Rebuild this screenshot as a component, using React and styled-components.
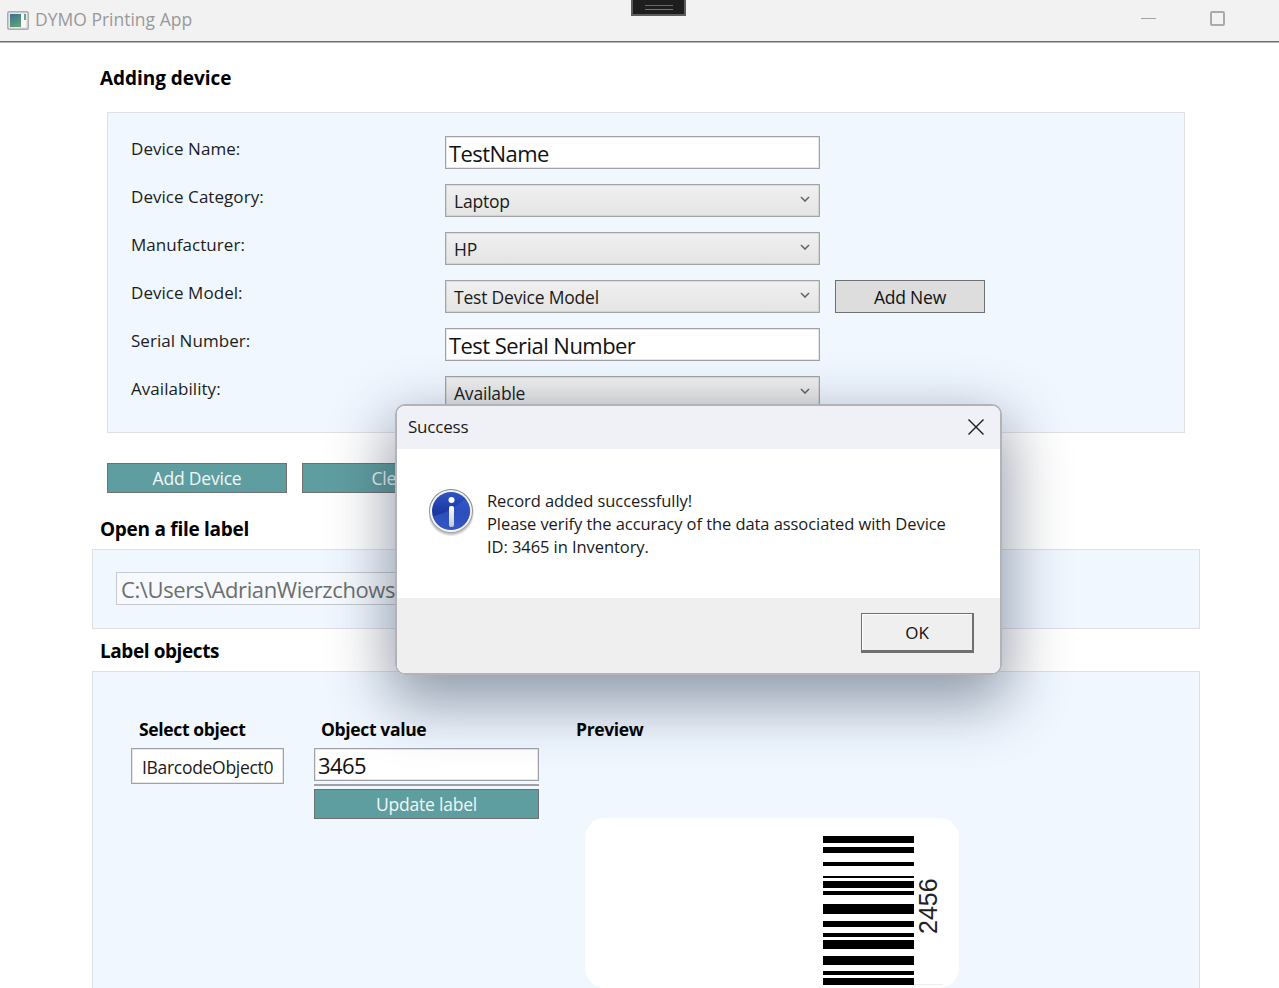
import React from "react";
import styled, { createGlobalStyle } from "styled-components";

const GlobalStyle = createGlobalStyle`
  html, body {
    margin: 0;
    padding: 0;
    background: #fff;
  }
  body {
    font-family: "Open Sans", "Noto Sans", sans-serif;
    color: #111;
  }
`;

const Page = styled.div`
  position: relative;
  width: 1279px;
  height: 988px;
  overflow: hidden;
  background: #fff;
`;

const TitleBar = styled.div`
  height: 41px;
  background: #f2f2f2;
  border-bottom: 1px solid #6e6e6e;
  box-shadow: 0 1px 0 #b5b5b5;
  display: flex;
  align-items: center;
  padding-left: 7px;
`;

const AppName = styled.div`
  margin-left: 6px;
  font-size: 17.5px;
  color: #999;
  margin-top: -4px;
`;

const WindowButtons = styled.div`
  margin-left: auto;
  display: flex;
  align-items: center;
  margin-right: 54px;
  gap: 54px;
  margin-top: -5px;
`;

const Minimize = styled.div`
  width: 15px;
  height: 1px;
  background: #a3a3a3;
`;

const Maximize = styled.div`
  width: 11px;
  height: 11px;
  border: 2px solid #aaa;
  border-radius: 2px;
`;

const DragHandle = styled.div`
  position: absolute;
  left: 631px;
  top: 0;
  width: 51px;
  height: 14px;
  background: #1e1e1e;
  border: 2px solid #5c5c5c;
  border-top: 0;
  display: flex;
  align-items: flex-start;
  justify-content: center;
  &::after {
    content: "";
    width: 28px;
    height: 3px;
    margin-top: 5px;
    border-top: 1px solid #666;
    border-bottom: 1px solid #777;
  }
`;

const Heading = styled.h2`
  margin: ${props => props.$top}px 0 0 100px;
  font-size: 19px;
  line-height: 28px;
  font-weight: 700;
  letter-spacing: ${props => props.$tracking}px;
  color: #000;
`;

const Panel = styled.div`
  box-sizing: border-box;
  margin: ${props => props.$top}px 0 0 ${props => props.$left}px;
  width: ${props => props.$width}px;
  background: #f0f7ff;
  border: 1px solid #dfe0e2;
`;

const FormPanel = styled(Panel)`
  height: 321px;
  padding: 23px 0 0 23px;
  display: grid;
  grid-template-columns: 314px 375px 150px;
  grid-auto-rows: 33px;
  column-gap: 0;
  row-gap: 15px;
`;

const FieldLabel = styled.div`
  font-size: 17px;
  line-height: 25px;
  letter-spacing: 0.05px;
  color: #1c1c1c;
`;

const TextBox = styled.div`
  box-sizing: border-box;
  height: 33px;
  background: #fff;
  border: 1px solid #a0a2a7;
  box-shadow: inset 0 0 0 1px rgba(170, 172, 176, 0.3);
  padding-left: 3px;
  font-size: 22px;
  line-height: 32px;
  letter-spacing: -0.55px;
  color: #111;
  white-space: nowrap;
  overflow: hidden;
`;

const Select = styled.div`
  box-sizing: border-box;
  height: 33px;
  background: linear-gradient(#f0f0f0, #e4e4e4);
  border: 1px solid #a4a4a4;
  box-shadow: inset 0 0 0 1px rgba(170, 170, 170, 0.3);
  padding: 1px 9px 0 8px;
  display: flex;
  align-items: center;
  justify-content: space-between;
  font-size: 17.5px;
  letter-spacing: -0.2px;
  color: #1a1a1a;
  svg {
    margin-top: -5px;
  }
`;

const AddNew = styled.div`
  box-sizing: border-box;
  margin-left: 15px;
  width: 150px;
  height: 33px;
  background: #dddddd;
  border: 1px solid #707070;
  display: flex;
  align-items: center;
  justify-content: center;
  font-size: 17.5px;
  letter-spacing: -0.2px;
  color: #111;
`;

const Actions = styled.div`
  display: flex;
  gap: 15px;
  margin: 30px 0 0 107px;
`;

const TealButton = styled.div`
  box-sizing: border-box;
  width: ${props => props.$width}px;
  height: 30px;
  background: #5f9ea0;
  border: 1px solid #707070;
  display: flex;
  align-items: center;
  justify-content: center;
  font-size: 17.5px;
  letter-spacing: -0.2px;
  color: #f2f6f6;
`;

const FilePanel = styled(Panel)`
  height: 80px;
  padding: 22px 0 0 23px;
`;

const PathBox = styled.div`
  box-sizing: border-box;
  width: 700px;
  height: 33px;
  background: #f6fafe;
  border: 1px solid #c6c9ce;
  padding-left: 4px;
  font-size: 22px;
  line-height: 33px;
  letter-spacing: -0.4px;
  color: #6e6e6e;
  white-space: nowrap;
`;

const ObjectsPanel = styled(Panel)`
  padding: 43px 0 40px 38px;
  display: grid;
  grid-template-columns: 153px 225px 400px;
  column-gap: 30px;
  align-items: start;
`;

const Column = styled.div`
  display: flex;
  flex-direction: column;
  &:last-child {
    margin-left: 7px;
  }
`;

const ColumnTitle = styled.div`
  font-size: 17.5px;
  line-height: 28px;
  font-weight: 700;
  letter-spacing: -0.35px;
  color: #000;
  margin-bottom: 5px;
  padding-left: ${props => props.$indent}px;
`;

const ObjectItem = styled.div`
  box-sizing: border-box;
  height: 36px;
  background: #fff;
  border: 1px solid #a0a2a7;
  box-shadow: inset 0 0 0 1px rgba(170, 172, 176, 0.3);
  padding-left: 10px;
  font-size: 17.5px;
  line-height: 36px;
  letter-spacing: -0.3px;
  color: #1a1a1a;
`;

const Divider = styled.div`
  height: 2px;
  background: #a0a2a8;
  margin: 3px 0;
`;

const LabelCard = styled.div`
  box-sizing: border-box;
  margin: 70px 0 0 9px;
  width: 374px;
  height: 170px;
  background: #fff;
  border-radius: 20px;
  padding: 18px 0 0 238px;
  svg {
    display: block;
  }
`;

const DialogBox = styled.div`
  position: absolute;
  left: 395px;
  top: 404px;
  box-sizing: border-box;
  width: 607px;
  height: 271px;
  display: flex;
  flex-direction: column;
  background: #fff;
  border: 2px solid #b1b3b6;
  border-radius: 10px;
  overflow: hidden;
`;

const DialogShadow = styled.div`
  position: absolute;
  left: 395px;
  top: 404px;
  width: 607px;
  height: 271px;
  border-radius: 10px;
  box-shadow: 0 22px 60px 6px rgba(40, 52, 75, 0.48);
`;

const DialogHeader = styled.div`
  box-sizing: border-box;
  height: 43px;
  flex: none;
  background: #f0f1f6;
  display: flex;
  align-items: center;
  justify-content: space-between;
  padding: 0 16px 2px 11px;
  font-size: 17px;
  letter-spacing: -0.2px;
  color: #1a1a1a;
`;

const DialogBody = styled.div`
  flex: 1;
  display: flex;
  align-items: flex-start;
  padding: 40px 30px 0 32px;
  gap: 12px;
`;

const Message = styled.div`
  font-size: 16.5px;
  line-height: 23px;
  letter-spacing: -0.07px;
  color: #1a1a1a;
`;

const DialogFooter = styled.div`
  height: 75px;
  flex: none;
  background: #efefef;
  display: flex;
  justify-content: flex-end;
  padding: 15px 26px 0 0;
  box-sizing: border-box;
`;

const OkButton = styled.div`
  box-sizing: border-box;
  width: 113px;
  height: 40px;
  background: #efefef;
  border: 1px solid #6f6f6f;
  border-right-width: 2px;
  border-bottom-width: 3px;
  box-shadow: inset 1px 1px 0 #fff;
  display: flex;
  align-items: center;
  justify-content: center;
  font-size: 17px;
  color: #111;
`;

const BARS = [
  [0, 7], [11, 6], [26, 4], [40, 2], [45, 7], [55, 4], [68, 10], [85, 6],
  [97, 4], [104, 9], [120, 9], [135, 4], [142, 7],
];

const Chevron = () => (
  <svg width="10" height="6" viewBox="0 0 10 6">
    <path d="M1 1l4 4 4-4" fill="none" stroke="#666" strokeWidth="1.6" />
  </svg>
);

const AppIcon = () => (
  <svg width="22" height="19" viewBox="0 0 22 19">
    <defs>
      <linearGradient id="appFill" x1="0" y1="0" x2="0.4" y2="1">
        <stop offset="0" stopColor="#3b6f93" />
        <stop offset="1" stopColor="#5c9f78" />
      </linearGradient>
    </defs>
    <rect x="0.75" y="0.75" width="20.5" height="17.5" rx="1.5" fill="#e6e6e6" stroke="#adadad" strokeWidth="1.5" />
    <rect x="3" y="3" width="11" height="13" fill="url(#appFill)" />
    <rect x="14" y="3" width="5" height="13" fill="#f7f7f7" />
    <rect x="17" y="3" width="2" height="6" fill="#6fa58a" />
  </svg>
);

const InfoIcon = () => (
  <svg width="46" height="48" viewBox="0 0 46 48" style={{ flex: "none" }}>
    <defs>
      <linearGradient id="infoRing" x1="0" y1="0" x2="0" y2="1">
        <stop offset="0" stopColor="#7f828b" />
        <stop offset="1" stopColor="#a9abb1" />
      </linearGradient>
      <linearGradient id="infoBlue" x1="0" y1="0" x2="0" y2="1">
        <stop offset="0" stopColor="#2f55c4" />
        <stop offset="0.55" stopColor="#1a36a0" />
        <stop offset="1" stopColor="#2a4cb8" />
      </linearGradient>
      <linearGradient id="infoBar" x1="0" y1="0" x2="0" y2="1">
        <stop offset="0" stopColor="#ffffff" />
        <stop offset="1" stopColor="#c4c8d0" />
      </linearGradient>
      <radialGradient id="infoShadow">
        <stop offset="0.85" stopColor="#000" stopOpacity="0.3" />
        <stop offset="1" stopColor="#000" stopOpacity="0" />
      </radialGradient>
    </defs>
    <circle cx="22" cy="24" r="23.5" fill="url(#infoShadow)" />
    <circle cx="22" cy="22" r="22" fill="url(#infoRing)" />
    <circle cx="22" cy="22" r="21" fill="#f6f6f6" />
    <circle cx="22" cy="22" r="19" fill="url(#infoBlue)" />
    <path d="M4 27c9-1 22-8 32-17 4 4 6 9 5 15-2 9-10 16-19 16S6 35 4 27z" fill="#3a5fd0" opacity="0.6" />
    <circle cx="22.5" cy="11" r="3" fill="#fff" />
    <rect x="20" y="17" width="5" height="21" rx="2" fill="url(#infoBar)" />
  </svg>
);

const CloseIcon = () => (
  <svg width="16" height="16" viewBox="0 0 16 16">
    <path d="M0.5 0.5l15 15M15.5 0.5l-15 15" stroke="#1a1a1a" strokeWidth="1.4" fill="none" />
  </svg>
);

const Barcode = () => (
  <svg width="122" height="150" viewBox="0 0 122 150">
    <line x1="91" x2="120" y1="148.5" y2="148.5" stroke="#ececec" />
    {BARS.map(([y, h]) => (
      <rect key={y} x="0" y={y} width="91" height={h} fill="#000" />
    ))}
    <text
      transform="translate(114 98) rotate(-90)"
      fontFamily="'Liberation Sans', sans-serif"
      fontSize="25"
      fill="#222"
    >
      2456
    </text>
  </svg>
);

const FORM_ROWS = [
  { label: "Device Name:", value: "TestName", kind: "text" },
  { label: "Device Category:", value: "Laptop" },
  { label: "Manufacturer:", value: "HP" },
  { label: "Device Model:", value: "Test Device Model", extra: true },
  { label: "Serial Number:", value: "Test Serial Number", kind: "text" },
  { label: "Availability:", value: "Available" },
];

export default function App() {
  return (
    <Page>
      <GlobalStyle />
      <TitleBar>
        <AppIcon />
        <AppName>DYMO Printing App</AppName>
        <WindowButtons>
          <Minimize />
          <Maximize />
        </WindowButtons>
      </TitleBar>
      <DragHandle />

      <Heading $top={22} $tracking={-0.05}>Adding device</Heading>
      <FormPanel $top={20} $left={107} $width={1078}>
        {FORM_ROWS.map(row => (
          <React.Fragment key={row.label}>
            <FieldLabel>{row.label}</FieldLabel>
            {row.kind === "text" ? (
              <TextBox>{row.value}</TextBox>
            ) : (
              <Select>
                {row.value}
                <Chevron />
              </Select>
            )}
            {row.extra ? <AddNew>Add New</AddNew> : <div />}
          </React.Fragment>
        ))}
      </FormPanel>

      <Actions>
        <TealButton $width={180}>Add Device</TealButton>
        <TealButton $width={180}>Clear</TealButton>
      </Actions>

      <Heading $top={22} $tracking={-0.27}>Open a file label</Heading>
      <FilePanel $top={6} $left={92} $width={1108}>
        <PathBox>C:\Users\AdrianWierzchowski\Documents\Labels\Device.dymo</PathBox>
      </FilePanel>

      <Heading $top={8} $tracking={-0.42}>Label objects</Heading>
      <ObjectsPanel $top={6} $left={92} $width={1108}>
        <Column>
          <ColumnTitle $indent={8}>Select object</ColumnTitle>
          <ObjectItem>IBarcodeObject0</ObjectItem>
        </Column>
        <Column>
          <ColumnTitle $indent={7}>Object value</ColumnTitle>
          <TextBox>3465</TextBox>
          <Divider />
          <TealButton $width={225}>Update label</TealButton>
        </Column>
        <Column>
          <ColumnTitle>Preview</ColumnTitle>
          <LabelCard>
            <Barcode />
          </LabelCard>
        </Column>
      </ObjectsPanel>

      <DialogShadow />
      <DialogBox>
        <DialogHeader>
          Success
          <CloseIcon />
        </DialogHeader>
        <DialogBody>
          <InfoIcon />
          <Message>
            Record added successfully!
            <br />
            Please verify the accuracy of the data associated with Device
            <br />
            ID: 3465 in Inventory.
          </Message>
        </DialogBody>
        <DialogFooter>
          <OkButton>OK</OkButton>
        </DialogFooter>
      </DialogBox>
    </Page>
  );
}
